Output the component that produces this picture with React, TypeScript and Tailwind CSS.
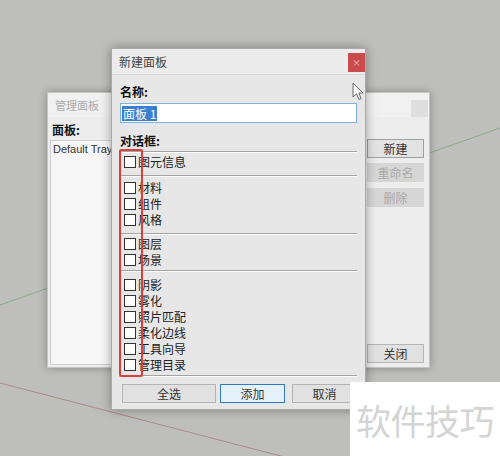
import React from 'react';

const cjk = "font-['Noto_Sans_CJK_SC','Noto_Sans',sans-serif]";

// Etched separator used between checkbox groups
const Rule = ({ className = '' }: { className?: string }) => (
  <div className={`h-[2px] border-t border-[#a3a3a3] border-b border-b-white ${className}`} />
);

const Check = ({ label, className = '' }: { label: string; className?: string }) => (
  <div className={`flex items-center h-[16px] pl-[4px] gap-[2px] ${className}`}>
    <span className="w-[12px] h-[12px] border border-[#333] bg-white shrink-0" />
    <span className="text-[12px] leading-[16px] text-[#222]">{label}</span>
  </div>
);

const Btn = ({
  children,
  className = '',
}: {
  children: React.ReactNode;
  className?: string;
}) => (
  <div
    className={`h-[19px] flex items-center justify-center text-[12px] text-[#333] border ${className}`}
  >
    {children}
  </div>
);

const ManagerWindow = () => (
  <div className="absolute left-[47px] top-[92px] w-[383px] h-[276px] flex flex-col bg-[#ededed] border border-[#c4c4c4] shadow-[0_0_8px_rgba(0,0,0,0.3)]">
    <div className="h-[24px] flex items-center justify-between pl-[7px] pr-[1px] bg-[#f1f1f1]">
      <span className="text-[11px] text-[#ababab]">管理面板</span>
      <span className="w-[17px] h-[17px] bg-[#dedede] mt-[6px]" />
    </div>
    <div className="flex-1 flex pl-[2px] pr-[5px] pb-[2px]">
      <div className="w-[64px] flex flex-col pt-[5px]">
        <span className="text-[12px] leading-[16px] font-bold text-[#111] pl-[2px]">面板:</span>
        <div className="flex-1 mt-[2px] bg-[#f6f6f6] border border-[#cfcfcf] px-[2px] pt-[1px] overflow-hidden">
          <div className="font-['Liberation_Sans',sans-serif] text-[11px] leading-[14px] text-[#333] whitespace-nowrap">
            Default Tray
          </div>
        </div>
      </div>
      <div className="flex-1" />
      <div className="w-[57px] flex flex-col pt-[22px] pb-[2px]">
        <Btn className="h-[18px] bg-[#e3e3e3] border-[#9f9f9f] text-[#222]">新建</Btn>
        <Btn className="h-[18px] mt-[5px] bg-[#d6d6d6] border-[#d6d6d6] text-[#a9a9a9]">重命名</Btn>
        <Btn className="h-[18px] mt-[6px] bg-[#d6d6d6] border-[#d6d6d6] text-[#a9a9a9]">删除</Btn>
        <div className="flex-1" />
        <Btn className="bg-[#e1e1e1] border-[#b5b5b5]">关闭</Btn>
      </div>
    </div>
  </div>
);

const NewPanelWindow = () => (
  <div className="absolute left-[111px] top-[48px] w-[255px] h-[362px] flex flex-col bg-[#e7e7e7] border border-[#a9a9a9] shadow-[0_0_10px_rgba(0,0,0,0.35)]">
    <div className="h-[26px] flex items-center justify-between pl-[7px] bg-[#ececec] border-b border-[#dadada]">
      <span className="text-[12px] text-[#444]">新建面板</span>
      <span className="w-[17px] h-[19px] mt-[2px] bg-[#c94b4b] flex items-center justify-center text-[9px] leading-none text-[#f3c9c9]">
        ×
      </span>
    </div>
    <div className="flex flex-col px-[8px] pt-[9px]">
      <span className="text-[12px] leading-[16px] font-bold text-[#111]">名称:</span>
      <div className="mt-[3px] h-[20px] bg-white border border-[#7fb0e2] flex items-center px-[1px]">
        <span className="bg-[#3a7fd0] text-white text-[12px] leading-[15px] px-[1px]">面板 1</span>
      </div>
      <span className="mt-[10px] text-[12px] leading-[16px] font-bold text-[#111]">对话框:</span>
      <Rule className="mt-[2px]" />
      <Check label="图元信息" className="mt-[1px]" />
      <Rule className="mt-[5px]" />
      <Check label="材料" className="mt-[3px]" />
      <Check label="组件" />
      <Check label="风格" />
      <Rule className="mt-[5px]" />
      <Check label="图层" className="mt-[1px]" />
      <Check label="场景" />
      <Rule className="mt-[2px]" />
      <Check label="阴影" className="mt-[5px]" />
      <Check label="雾化" />
      <Check label="照片匹配" />
      <Check label="柔化边线" />
      <Check label="工具向导" />
      <Check label="管理目录" />
      <Rule className="mt-[2px]" />
      <div className="mt-[7px] flex pl-[2px]">
        <Btn className="w-[94px] bg-[#e1e1e1] border-[#b3b3b3]">全选</Btn>
        <Btn className="w-[65px] ml-[4px] bg-[#e5f1fb] border-[#2f7ac4]">添加</Btn>
        <Btn className="w-[65px] ml-[7px] bg-[#e1e1e1] border-[#b3b3b3]">取消</Btn>
      </div>
    </div>
  </div>
);

export default function App() {
  return (
    <div className={`relative w-[500px] h-[456px] overflow-hidden bg-[#bebebc] ${cjk}`}>
      {/* model axes in the viewport */}
      <svg className="absolute inset-0" width="500" height="456">
        <line x1="0" y1="305" x2="500" y2="128" stroke="#86ad86" strokeWidth="1" />
        <line x1="0" y1="383" x2="500" y2="513" stroke="#ad8a86" strokeWidth="1" />
      </svg>

      <ManagerWindow />
      <NewPanelWindow />

      {/* highlight around the checkbox column */}
      <div className="absolute left-[119px] top-[149px] w-[24px] h-[228px] border-2 border-[#d9403c] rounded-[2px]" />

      {/* mouse pointer */}
      <svg className="absolute left-[352px] top-[82px]" width="13" height="19" viewBox="0 0 13 19">
        <path
          d="M1 1 L1 15 L4.5 11.8 L7 17.5 L9.2 16.5 L6.8 11 L11.2 11 Z"
          fill="#f4f4f4"
          stroke="#6a6a6a"
          strokeWidth="1"
          strokeLinejoin="round"
        />
      </svg>

      <div className="absolute left-[350px] top-[382px] w-[150px] h-[74px] bg-white flex items-center justify-center">
        <span className="text-[35px] leading-none text-[#d4d4d4] tracking-[-0.5px]">软件技巧</span>
      </div>
    </div>
  );
}
